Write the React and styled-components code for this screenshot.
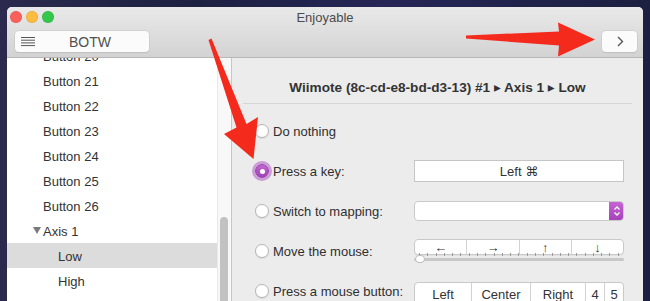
import React from "react";
import styled, { createGlobalStyle } from "styled-components";

const GlobalStyle = createGlobalStyle`
  html, body {
    margin:0;
    padding:0;
    height:301px;
    overflow:hidden;
    background:#20244a;
  }
  body {
    font-family:"Liberation Sans", "DejaVu Sans", Arial, sans-serif;
    color:#2f2f2f;
  }
`;

const Page = styled.div`
  position:relative;
  width:650px;
  height:301px;
  box-sizing:border-box;
  padding:7px 7px 0;
  background:linear-gradient(90deg, #2b2a4e 0%, #1d2142 30%, #272657 60%, #1c2040 100%);
`;
const Window = styled.div`
  height:320px;
  border-radius:5px 5px 0 0;
  overflow:hidden;
  background:#ececec;
  display:flex;
  flex-direction:column;
`;
const Header = styled.div`
  height:50px;
  flex:none;
  border-bottom:1px solid #b7b7b7;
  background:linear-gradient(#e9e9e9, #d3d3d3);
  display:grid;
  grid-template-rows:20px 21px;
  row-gap:4px;
`;
const TitleRow = styled.div`
  display:grid;
  grid-template-columns:1fr auto 1fr;
  align-items:center;
`;
const Lights = styled.div`
  display:flex;
  gap:4px;
  padding-left:3px;
`;
const Light = styled.span`
  width:12px;
  height:12px;
  border-radius:50%;
  background:${p => p.color};
  box-shadow:inset 0 0 0 0.5px rgba(0,0,0,0.15);
`;
const Title = styled.div`
  font-size:13px;
  color:#4b4b4b;
`;
const ToolRow = styled.div`
  display:flex;
  justify-content:space-between;
  padding:0 6px 0 8px;
`;
const ToolButton = styled.div`
  width:${p => p.w}px;
  height:21px;
  box-sizing:border-box;
  background:#fbfbfb;
  border-radius:4px;
  box-shadow:0 0 0 0.5px #c4c4c4, 0 1px 1px rgba(0,0,0,0.12);
  display:flex;
  align-items:center;
  justify-content:center;
  padding:${p => p.pad || "0"};
  color:#505050;
  font-size:14px;
`;
const Label = styled.span`
  flex:1;
  text-align:center;
`;
const Body = styled.div`
  display:flex;
  flex:1;
  min-height:0;
`;
const Sidebar = styled.div`
  width:210px;
  background:#fff;
  overflow:hidden;
`;
const List = styled.div`
  margin-top:-15px;
`;
const Row = styled.div`
  height:25px;
  box-sizing:border-box;
  padding-top:2px;
  display:flex;
  align-items:center;
  padding-left:${p => p.indent}px;
  background:${p => (p.selected ? "#dcdcdc" : "transparent")};
  font-size:13px;
  color:#333;
`;
const Disclosure = styled.span`
  width:0;
  height:0;
  border-left:4px solid transparent;
  border-right:4px solid transparent;
  border-top:7px solid #7a7a7a;
  margin:-2px 2px 0 0;
`;
const Scrollbar = styled.div`
  width:15px;
  box-sizing:border-box;
  background:#f8f8f8;
  border-left:1px solid #e9e9e9;
  border-right:1px solid #c6c6c6;
  padding:159px 0 0 2px;
`;
const Thumb = styled.div`
  width:8px;
  height:200px;
  border-radius:4px;
  background:#c2c2c2;
`;
const Panel = styled.div`
  flex:1;
  background:#ececec;
`;
const PanelHead = styled.div`
  margin:0 11px;
  padding:22px 0 7px;
  border-bottom:1px solid #d6d6d6;
  text-align:center;
  font-size:13.6px;
  line-height:16px;
  font-weight:bold;
  color:#333;
`;
const Options = styled.div`
  padding:7px 19px 0 23px;
`;
const OptionRow = styled.div`
  height:40px;
  display:grid;
  grid-template-columns:1fr 210px;
  align-items:center;
`;
const RadioLabel = styled.label`
  display:flex;
  align-items:center;
  gap:4px;
  font-size:13px;
  color:#2f2f2f;
`;
const Radio = styled.span`
  width:14px;
  height:14px;
  box-sizing:border-box;
  border-radius:50%;
  display:flex;
  align-items:center;
  justify-content:center;
  background:${p => (p.checked ? "linear-gradient(#c266d2, #a043b6)" : "#fff")};
  border:1px solid ${p => (p.checked ? "#9a3db0" : "#b4b4b4")};
  box-shadow:${p => (p.checked ? "0 0 0 3px rgba(176, 92, 196, 0.55)" : "0 1px 1px rgba(0,0,0,0.08)")};
  &::after {
    content:"";
    display:${p => (p.checked ? "block" : "none")};
    width:5px;
    height:5px;
    border-radius:50%;
    background:#fff;
  }
`;
const KeyField = styled.div`
  height:22px;
  box-sizing:border-box;
  background:#fff;
  border:1px solid #c6c6c6;
  display:flex;
  align-items:center;
  justify-content:center;
  font-size:13px;
  color:#333;
`;
const Select = styled.div`
  height:20px;
  box-sizing:border-box;
  background:#fff;
  border:1px solid #cacaca;
  border-radius:4px;
  display:flex;
  justify-content:flex-end;
  overflow:hidden;
`;
const Stepper = styled.div`
  width:15px;
  margin:-1px -1px -1px 0;
  background:linear-gradient(#c766d4, #a540b8);
  display:flex;
  align-items:center;
  justify-content:center;
`;
const MouseControl = styled.div`
  display:flex;
  flex-direction:column;
  margin-top:-2px;
`;
const Segments = styled.div`
  display:flex;
  height:${p => p.h}px;
  box-sizing:border-box;
  background:#fff;
  border:1px solid #c9c9c9;
  border-radius:4px;
  box-shadow:0 1px 0 rgba(0,0,0,0.04);
`;
const Segment = styled.div`
  flex:${p => p.w ? `0 0 ${p.w}px` : 1};
  display:flex;
  align-items:center;
  justify-content:center;
  font-size:${p => p.fs || 13}px;
  color:#333;
  & + & {
    border-left:1px solid #d2d2d2;
  }
`;
const Ticks = styled.div`
  display:flex;
  justify-content:space-between;
  padding:0 5px;
  height:3px;
  margin-top:-2px;
`;
const Tick = styled.span`
  width:1px;
  height:3px;
  background:#9a9a9a;
`;
const Track = styled.div`
  position:relative;
  height:3px;
  margin-top:2px;
  background:#c8c8c8;
  border-radius:2px;
`;
const Knob = styled.span`
  position:absolute;
  left:1px;
  top:-3px;
  width:10px;
  height:8px;
  box-sizing:border-box;
  border-radius:5px;
  background:#fff;
  border:1px solid #bdbdbd;
`;
const ButtonsWrap = styled.div`
  align-self:start;
  margin-top:11px;
`;
const Overlay = styled.svg`
  position:absolute;
  left:0;
  top:0;
  pointer-events:none;
`;

const MenuIcon = () => (
  <svg width="14" height="10" viewBox="0 0 14 10" style={{ marginLeft: 6 }}>
    {[0.5, 3.2, 5.9, 8.6].map(y => (
      <line key={y} x1="0" x2="14" y1={y} y2={y} stroke="#555" strokeWidth="1" />
    ))}
  </svg>
);

const sidebarRows = [
  { label: "Button 20", indent: 36 },
  { label: "Button 21", indent: 36 },
  { label: "Button 22", indent: 36 },
  { label: "Button 23", indent: 36 },
  { label: "Button 24", indent: 36 },
  { label: "Button 25", indent: 36 },
  { label: "Button 26", indent: 36 },
  { label: "Axis 1", indent: 26, group: true },
  { label: "Low", indent: 51, selected: true },
  { label: "High", indent: 51 },
  { label: "Axis 2", indent: 26, group: true },
];

const App = () => {
  return (
    <Page>
      <GlobalStyle />
      <Window>
        <Header>
          <TitleRow>
            <Lights>
              <Light color="#fc605b" />
              <Light color="#fdbc40" />
              <Light color="#34c84a" />
            </Lights>
            <Title>Enjoyable</Title>
            <div />
          </TitleRow>
          <ToolRow>
            <ToolButton w={134} pad="0 4px 0 0">
              <MenuIcon />
              <Label>BOTW</Label>
            </ToolButton>
            <ToolButton w={35}>
              <svg width="8" height="11" viewBox="0 0 8 11">
                <polyline points="2,1 6.5,5.5 2,10" fill="none" stroke="#555" strokeWidth="1.4" />
              </svg>
            </ToolButton>
          </ToolRow>
        </Header>
        <Body>
          <Sidebar>
            <List>
              {sidebarRows.map(r => (
                <Row key={r.label} indent={r.indent} selected={r.selected}>
                  {r.group && <Disclosure />}
                  {r.label}
                </Row>
              ))}
            </List>
          </Sidebar>
          <Scrollbar>
            <Thumb />
          </Scrollbar>
          <Panel>
            <PanelHead>Wiimote (8c-cd-e8-bd-d3-13) #1 ▸ Axis 1 ▸ Low</PanelHead>
            <Options>
              <OptionRow>
                <RadioLabel><Radio />Do nothing</RadioLabel>
              </OptionRow>
              <OptionRow>
                <RadioLabel><Radio checked />Press a key:</RadioLabel>
                <KeyField>Left ⌘</KeyField>
              </OptionRow>
              <OptionRow>
                <RadioLabel><Radio />Switch to mapping:</RadioLabel>
                <Select>
                  <Stepper>
                    <svg width="8" height="12" viewBox="0 0 8 12">
                      <polyline points="1.5,4.5 4,2 6.5,4.5" fill="none" stroke="#fff" strokeWidth="1.3" />
                      <polyline points="1.5,7.5 4,10 6.5,7.5" fill="none" stroke="#fff" strokeWidth="1.3" />
                    </svg>
                  </Stepper>
                </Select>
              </OptionRow>
              <OptionRow>
                <RadioLabel><Radio />Move the mouse:</RadioLabel>
                <MouseControl>
                  <Segments h={16}>
                    {["←", "→", "↑", "↓"].map(a => (
                      <Segment key={a} fs={13}>{a}</Segment>
                    ))}
                  </Segments>
                  <Ticks>
                    {Array.from({ length: 25 }).map((_, i) => <Tick key={i} />)}
                  </Ticks>
                  <Track>
                    <Knob />
                  </Track>
                </MouseControl>
              </OptionRow>
              <OptionRow>
                <RadioLabel><Radio />Press a mouse button:</RadioLabel>
                <ButtonsWrap>
                  <Segments h={24}>
                    <Segment w={56}>Left</Segment>
                    <Segment w={58}>Center</Segment>
                    <Segment w={54}>Right</Segment>
                    <Segment>4</Segment>
                    <Segment>5</Segment>
                  </Segments>
                </ButtonsWrap>
              </OptionRow>
            </Options>
          </Panel>
        </Body>
      </Window>
      <Overlay width="650" height="301" viewBox="0 0 650 301">
        <polygon
          fill="#f42a1d"
          points="208.5,40 211.5,38.5 246.5,124 258,117 253.5,159 224,134 236.5,127.5"
        />
        <polygon
          fill="#f42a1d"
          points="466,35.5 559,31.5 558,22.5 595,39.5 558,56.5 559,45.5 466,38.5"
        />
      </Overlay>
    </Page>
  );
};

export default App;
